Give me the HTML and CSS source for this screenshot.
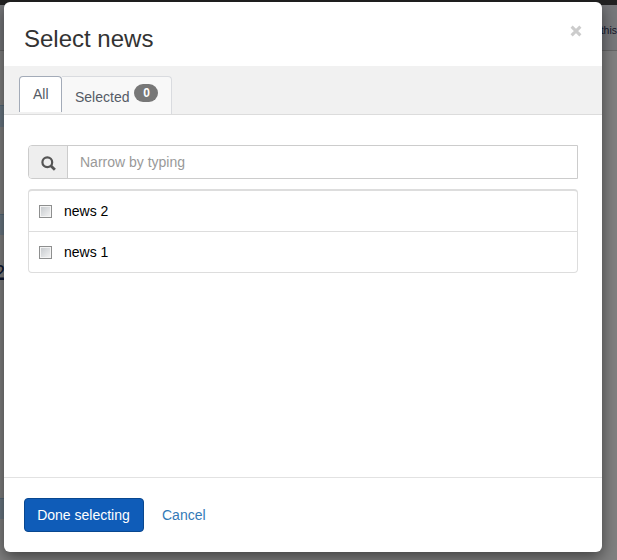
FILE: index.html
```html
<!DOCTYPE html>
<html lang="en">
<head>
<meta charset="utf-8">
<title>Select news</title>
<link rel="stylesheet" href="styles.css">
</head>
<body>
<div class="page">
  <div class="topbar"></div>
  <div class="toolbar"><span>this</span></div>
  <div class="content">
    <div class="strip"></div>
    <div class="strip second"></div>
    <div class="page-number"><span>2</span></div>
    <div class="strip last"></div>
  </div>
</div>
<div class="modal" role="dialog">
  <header class="modal-header">
    <h1>Select news</h1>
    <button class="close" aria-label="Close"><svg width="12" height="12" viewBox="0 0 12 12"><path d="M1.6 1.6L10.4 10.4M10.4 1.6L1.6 10.4"/></svg></button>
  </header>
  <nav class="tabs">
    <a class="tab active">All</a>
    <a class="tab">Selected <span class="badge">0</span></a>
  </nav>
  <main class="modal-body">
    <div class="search">
      <span class="addon"><svg width="15" height="15" viewBox="0 0 15 15"><circle cx="6.3" cy="6.2" r="4.9"/><path d="M9.8 9.8L13.9 13.7"/></svg></span>
      <input type="text" placeholder="Narrow by typing">
    </div>
    <div class="list">
      <label class="item"><span class="check"></span>news 2</label>
      <label class="item"><span class="check"></span>news 1</label>
    </div>
  </main>
  <footer class="modal-footer">
    <button class="done">Done selecting</button>
    <a class="cancel">Cancel</a>
  </footer>
</div>
</body>
</html>
```
FILE: styles.css
```css
* { box-sizing: border-box; }
body {
  margin: 0;
  height: 560px;
  overflow: hidden;
  position: relative;
  font: 14px/20px "Liberation Sans", Arial, sans-serif;
  background: #808080;
}
.page { height: 560px; overflow: hidden; }
.topbar { height: 5px; background: #222; }
.toolbar {
  height: 46px;
  padding: 15px 0 0;
  text-align: right;
  font-size: 10.5px;
  color: #14142a;
  background: #77787b;
  border-bottom: 1px solid #666;
}
.strip {
  width: 8px;
  height: 22px;
  margin-top: 54px;
  background: #6a7883;
  border-top: 1px solid #566a7a;
}
.strip.second { margin-top: 87px; height: 21px; }
.strip.last { margin-top: 214px; height: 21px; }
.page-number {
  display: flex;
  justify-content: flex-end;
  width: 5px;
  height: 25px;
  margin-top: 24px;
}
.page-number span {
  height: 21px;
  font-size: 20px;
  line-height: 26px;
  color: #101a33;
  border-bottom: 1px solid #101a33;
}
.modal {
  position: absolute;
  left: 4px;
  top: 2px;
  width: 598px;
  height: 550px;
  display: flex;
  flex-direction: column;
  background: #fff;
  border-radius: 6px;
  box-shadow: 0 5px 15px rgba(0, 0, 0, .5);
}
.modal-header {
  display: flex;
  justify-content: space-between;
  height: 64px;
  padding: 20px 20px 0 20px;
}
h1 {
  margin: 0;
  font-size: 24px;
  line-height: 34px;
  font-weight: 400;
  color: #333;
}
.close {
  height: 12px;
  margin-top: 3px;
  padding: 0;
  border: 0;
  background: none;
}
.close svg { display: block; fill: none; stroke: #ccc; stroke-width: 3; }
.tabs {
  display: flex;
  height: 49px;
  padding: 10px 15px 0;
  background: #f1f1f1;
  border-bottom: 1px solid #dcdcdc;
}
.tab {
  display: flex;
  width: 110px;
  height: 38px;
  padding: 10px 0 0 13px;
  color: #555b66;
  background: #f8f8f8;
  border: 1px solid #d9dbdf;
  border-bottom: 0;
  border-left: 0;
  border-radius: 0 4px 0 0;
}
.tab.active {
  width: 43px;
  height: 36px;
  padding: 7px 0 0 13px;
  background: #fff;
  border: 1px solid #a3abb8;
  border-bottom: 0;
  border-radius: 4px 4px 0 0;
}
.badge {
  width: 24px;
  height: 18px;
  margin: -3px 0 0 5px;
  border-radius: 9px;
  font-size: 12px;
  line-height: 18px;
  font-weight: 700;
  text-align: center;
  color: #fff;
  background: #777;
}
.modal-body { flex: 1; padding: 30px 24px 0; }
.search {
  display: flex;
  height: 34px;
  border: 1px solid #ccc;
  border-radius: 4px 0 0 4px;
}
.addon {
  display: flex;
  align-items: center;
  justify-content: center;
  width: 39px;
  background: #eee;
  border-right: 1px solid #ccc;
  border-radius: 3px 0 0 3px;
}
.addon svg { margin-top: 2px; fill: none; stroke: #555; stroke-width: 2.2; }
.addon path { stroke-width: 2.8; }
input {
  flex: 1;
  min-width: 0;
  padding: 0 12px;
  border: 0;
  font: inherit;
  background: #fff;
}
input::placeholder { color: #999; opacity: 1; }
.list {
  height: 84px;
  margin-top: 10px;
  border: 1px solid #ddd;
  border-top: 2px solid #ddd;
  border-radius: 4px;
}
.item {
  display: flex;
  height: 41px;
  padding: 10px 0 0 10px;
  color: #000;
}
.item:first-child { border-bottom: 1px solid #ddd; }
.check {
  width: 13px;
  height: 13px;
  margin: 4px 12px 0 0;
  border: 1px solid #8e8f8f;
  background: linear-gradient(135deg, #c3c7cb, #f5f5f5);
  box-shadow: inset 0 0 0 1px #f4f4f4;
}
.modal-footer {
  display: flex;
  align-items: flex-start;
  height: 75px;
  padding: 20px 20px 0;
  border-top: 1px solid #e2e2e2;
}
.done {
  width: 120px;
  height: 34px;
  padding: 0 1px 0 0;
  border: 1px solid #09478f;
  border-radius: 4px;
  font: inherit;
  color: #fff;
  background: #0f5cb8;
}
.cancel { padding: 7px 18px; color: #337ab7; }
```
